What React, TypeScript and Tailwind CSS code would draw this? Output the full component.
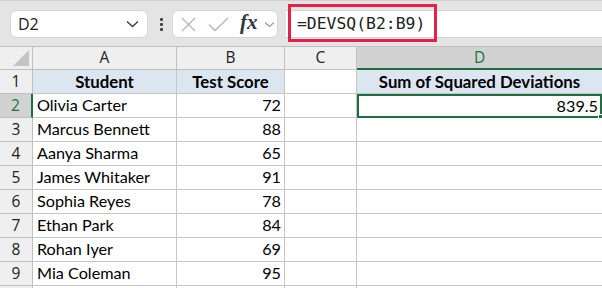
import React from "react";

const students = [
  { name: "Olivia Carter", score: 72 },
  { name: "Marcus Bennett", score: 88 },
  { name: "Aanya Sharma", score: 65 },
  { name: "James Whitaker", score: 91 },
  { name: "Sophia Reyes", score: 78 },
  { name: "Ethan Park", score: 84 },
  { name: "Rohan Iyer", score: 69 },
  { name: "Mia Coleman", score: 95 },
];

const cell = "border-r border-b border-[#c6c6c6] h-[24px] flex items-center";
const rowHead =
  "border-r border-b border-[#c0c0c0] bg-[#efefef] h-[24px] flex items-center justify-center text-[#222] font-['Open_Sans',sans-serif] text-[15.5px]";
const tableHead = "justify-center bg-[#dce6f1] font-bold text-[16.8px]";

const App: React.FC = () => {
  return (
    <div className="w-[602px] h-[288px] overflow-hidden bg-white font-['Lato',sans-serif] text-[16.2px] text-black">
      {/* formula bar */}
      <div className="relative h-[46px] bg-[#e4e4e4] border-t border-[#d0d0d0] flex items-start pt-[9px]">
        <div className="ml-[10px] w-[138px] h-[28px] rounded-md bg-white border border-[#d6d6d6] flex items-center justify-between pl-[7px] pr-[8px]">
          <span className="font-['Open_Sans',sans-serif] text-[16px] text-[#222]">D2</span>
          <svg width="13" height="8" viewBox="0 0 13 8" fill="none" stroke="#444" strokeWidth="1.5">
            <path d="M1 1.5 L6.5 6.5 L12 1.5" />
          </svg>
        </div>
        <div className="ml-[10px] w-[6px] h-[28px] flex flex-col items-center justify-center gap-[2px]">
          <span className="w-[3px] h-[3px] bg-[#444] rounded-[1px]" />
          <span className="w-[3px] h-[3px] bg-[#444] rounded-[1px]" />
          <span className="w-[3px] h-[3px] bg-[#444] rounded-[1px]" />
        </div>
        <div className="ml-[8px] w-[106px] h-[28px] rounded-md bg-white border border-[#d6d6d6] flex items-center pl-[8px]">
          <svg width="15" height="15" viewBox="0 0 15 15" fill="none" stroke="#b5b5b5" strokeWidth="1.3">
            <path d="M1 1 L14 14 M14 1 L1 14" />
          </svg>
          <svg className="ml-[12px]" width="21" height="15" viewBox="0 0 21 15" fill="none" stroke="#b5b5b5" strokeWidth="1.3">
            <path d="M1 7.5 L7 13.5 L20 1" />
          </svg>
          <span className="ml-[11px] font-['Liberation_Serif',serif] italic font-semibold text-[21px] text-[#2f3640] leading-none -mt-[3px]">
            fx
          </span>
          <svg className="ml-[6px]" width="11" height="7" viewBox="0 0 11 7" fill="none" stroke="#9a9a9a" strokeWidth="1.2">
            <path d="M1 1.5 L5.5 5.5 L10 1.5" />
          </svg>
        </div>
        <div className="ml-[8px] flex-1 h-[28px] bg-white border-y border-[#d6d6d6] flex items-center pl-[11px]">
          <span className="font-['DejaVu_Sans_Mono',monospace] text-[16.4px] text-[#222]">
            =DEVSQ(B2:B9)
          </span>
        </div>
        <div className="absolute left-[288px] top-[3px] w-[149px] h-[38px] border-[3px] border-[#e3224a]" />
      </div>

      {/* sheet */}
      <div className="grid grid-cols-[33px_144px_108px_72px_1fr] border-t border-[#c0c0c0]">
        {/* column headers */}
        <div className="relative h-[23px] bg-[#efefef] border-r border-b border-[#c0c0c0]">
          <div className="absolute right-[3px] bottom-[3px] w-0 h-0 border-l-[16px] border-l-transparent border-b-[16px] border-b-[#c4c4c4]" />
        </div>
        {["A", "B", "C"].map((c) => (
          <div
            key={c}
            className="h-[23px] bg-[#efefef] border-r border-b border-[#c0c0c0] flex items-center justify-center text-[#222] font-['Open_Sans',sans-serif] text-[15.5px]"
          >
            {c}
          </div>
        ))}
        <div className="h-[23px] bg-[#d2d2d2] border-b-2 border-[#1e6f3f] flex items-center justify-center text-[#1e6f3f] font-['Open_Sans',sans-serif] text-[15.5px]">
          D
        </div>

        {/* row 1 */}
        <div className={rowHead}>1</div>
        <div className={`${cell} ${tableHead}`}>Student</div>
        <div className={`${cell} ${tableHead}`}>Test Score</div>
        <div className={cell} />
        <div className={`${cell} ${tableHead} border-r-0`}>Sum of Squared Deviations</div>

        {students.map((s, i) => (
          <React.Fragment key={s.name}>
            <div
              className={
                i === 0
                  ? "h-[24px] flex items-center justify-center bg-[#d2d2d2] border-b border-[#c0c0c0] border-r-2 border-r-[#1e6f3f] text-[#1e6f3f] font-['Open_Sans',sans-serif] text-[15.5px]"
                  : rowHead
              }
            >
              {i + 2}
            </div>
            <div className={`${cell} pl-[4px]`}>{s.name}</div>
            <div className={`${cell} justify-end pr-[3px]`}>{s.score}</div>
            <div className={cell} />
            {i === 0 ? (
              <div className="relative h-[24px] border-2 border-[#1e6f3f] flex items-center justify-end pr-[2px]">
                839.5
                <span className="absolute -right-[3px] -bottom-[3px] w-[5px] h-[5px] bg-[#1e6f3f] border border-white" />
              </div>
            ) : (
              <div className={`${cell} border-r-0`} />
            )}
          </React.Fragment>
        ))}
        <div className={rowHead} />
        <div className={cell} />
        <div className={cell} />
        <div className={cell} />
        <div className={`${cell} border-r-0`} />
      </div>
    </div>
  );
};

export default App;
